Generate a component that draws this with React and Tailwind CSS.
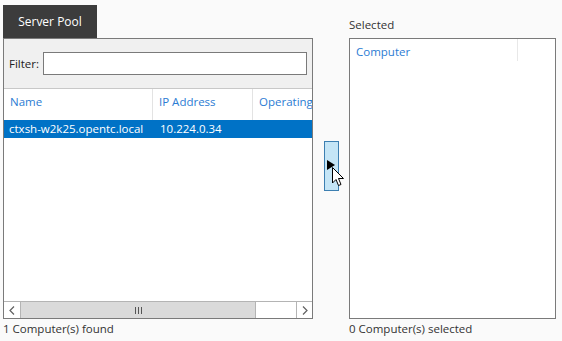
import React from 'react';

const font = { fontFamily: '"Open Sans", "Noto Sans", sans-serif' };

const Cursor = () => (
  <svg width="13" height="21" viewBox="0 0 13 21" className="absolute left-[7px] top-[25px]">
    <path d="M0.5 0.5 L0.5 16 L4 12.5 L6.5 18.5 L9 17.5 L6.5 11.5 L11.5 11.5 Z" fill="#fff" stroke="#000" strokeWidth="1" strokeLinejoin="round" />
  </svg>
);

export default function App() {
  return (
    <div className="w-[562px] h-[341px] bg-[#fafafa] text-[11.5px] text-[#333] overflow-hidden" style={font}>
      <div className="flex pt-[5px] pl-[3px]">
        {/* Left column */}
        <div className="flex flex-col w-[310px]">
          <div className="h-[33px] w-[94px] bg-[#3c3c3c] text-white text-[12px] flex items-center justify-center">
            Server Pool
          </div>
          <div className="h-[281px] border border-[#7a7a7a] flex flex-col bg-white">
            {/* Filter */}
            <div className="h-[50px] bg-[#f0f0f0] border-b border-[#c8c8c8] flex items-center pl-[5px] pr-[5px] gap-[4px]">
              <span className="text-[#222]">Filter:</span>
              <div className="flex-1 h-[23px] bg-white border border-[#7a7a7a]" />
            </div>
            {/* Header */}
            <div className="h-[31px] flex text-[#2b7cd3] shrink-0">
              <div className="w-[149px] pl-[6px] pt-[4px] border-r border-[#e3e3e3]">Name</div>
              <div className="w-[100px] pl-[6px] pt-[4px] border-r border-[#e3e3e3]">IP Address</div>
              <div className="flex-1 min-w-0 pl-[6px] pt-[4px] whitespace-nowrap overflow-hidden">Operating</div>
            </div>
            {/* Row */}
            <div className="h-[18px] flex items-center bg-[#0072c6] text-white">
              <div className="w-[149px] pl-[5px] whitespace-nowrap">ctxsh-w2k25.opentc.local</div>
              <div className="pl-[7px]">10.224.0.34</div>
            </div>
            <div className="flex-1" />
            {/* Scrollbar */}
            <div className="h-[17px] flex border-t border-[#b4b4b4] bg-white">
              <div className="w-[17px] flex items-center justify-center border-r border-[#b4b4b4]">
                <svg width="6" height="9" viewBox="0 0 6 9"><path d="M5 0.5 L1 4.5 L5 8.5" fill="none" stroke="#606060" strokeWidth="1.2" /></svg>
              </div>
              <div className="w-[235px] bg-[#dadada] border-r border-[#b4b4b4] flex items-center justify-center gap-[2px]">
                <span className="w-[1px] h-[7px] bg-[#555]" />
                <span className="w-[1px] h-[7px] bg-[#555]" />
                <span className="w-[1px] h-[7px] bg-[#555]" />
              </div>
              <div className="flex-1" />
              <div className="w-[16px] flex items-center justify-center border-l border-[#b4b4b4]">
                <svg width="6" height="9" viewBox="0 0 6 9"><path d="M1 0.5 L5 4.5 L1 8.5" fill="none" stroke="#606060" strokeWidth="1.2" /></svg>
              </div>
            </div>
          </div>
          <div className="pt-[1px]">1 Computer(s) found</div>
        </div>

        {/* Middle button */}
        <div className="w-[36px] flex justify-center pt-[136px]">
          <div className="relative w-[15px] h-[50px] bg-[#c4e5f6] border border-[#3c7fb1]">
            <svg width="8" height="10" viewBox="0 0 8 10" className="absolute left-[2px] top-[18px]">
              <path d="M0 0 L8 5 L0 10 Z" fill="#000" />
            </svg>
            <Cursor />
          </div>
        </div>

        {/* Right column */}
        <div className="flex flex-col w-[207px]">
          <div className="h-[33px] flex items-end pb-[5px]">Selected</div>
          <div className="h-[281px] border border-[#7a7a7a] bg-white flex">
            <div className="w-[168px] h-[22px] pl-[6px] pt-[4px] text-[#2b7cd3] border-r border-[#e8e8e8]">Computer</div>
          </div>
          <div className="pt-[1px]">0 Computer(s) selected</div>
        </div>
      </div>
    </div>
  );
}
